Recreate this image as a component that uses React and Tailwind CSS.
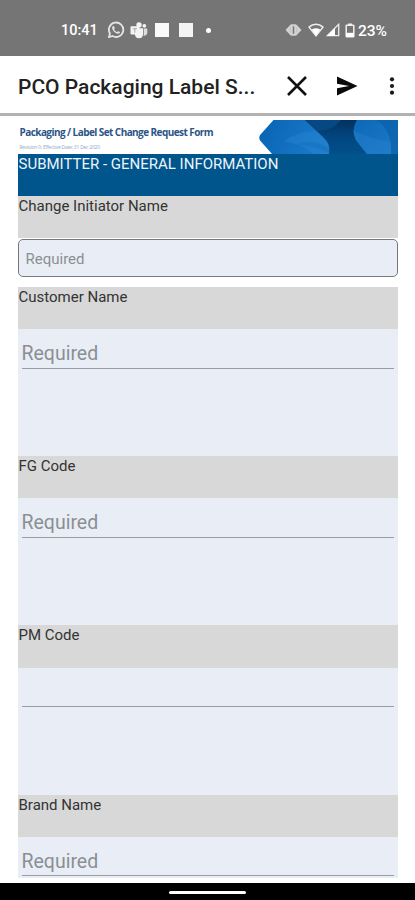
import React from 'react'

const fields = [
  { label: 'Customer Name', placeholder: 'Required' },
  { label: 'FG Code', placeholder: 'Required' },
  { label: 'PM Code', placeholder: '' },
  { label: 'Brand Name', placeholder: 'Required' },
]

function WhatsAppIcon() {
  return (
    <svg width="18" height="18" viewBox="0 0 24 24" fill="none" stroke="#e4e4e4" strokeWidth="2.4">
      <path d="M2.5 21.5l1.4-4.9A9.6 9.6 0 1 1 7.4 20z" strokeLinejoin="round" />
      <path
        d="M8.1 6.8c-2.300 1.900-.9 5.200 1.500 7.600s5.600 3.700 7.400 1.700c.5-.8.3-1.400-.3-1.700l-1.900-.9-1.400 1.300c-1.700-.6-3.200-2-4-3.900l1-1.400-.8-2.100c-.3-.8-.9-.9-1.500-.6z"
        fill="#e4e4e4"
        stroke="none"
      />
    </svg>
  )
}

function TeamsIcon() {
  return (
    <svg width="18" height="17" viewBox="0 0 18 17" fill="#f4f4f4">
      <circle cx="9" cy="3" r="2.700" />
      <circle cx="14.300" cy="3.800" r="1.900" />
      <path d="M5 6.300h8v6a4 4 0 0 1-8 0z" />
      <path d="M13.700 6.500H17.300v4.300a3.100 3.100 0 0 1-3.600 3z" fill="#dedede" />
      <rect x="0.500" y="4.300" width="8.600" height="8.200" rx="0.800" />
      <path d="M2.700 6.600h4.200M4.800 6.600v4.200" stroke="#b5b5b5" strokeWidth="1.200" />
    </svg>
  )
}

function VibrateIcon() {
  return (
    <svg width="17" height="14" viewBox="0 0 17 14">
      <path d="M.5 7L4 3.200 6 1.200h5l2 2L16.500 7 13 10.800l-2 2H6l-2-2z" fill="#d2d2d2" />
      <path d="M8.500 3.300v7.400" stroke="#777" strokeWidth="1.500" />
      <path d="M5.300 4.600v4.800M11.700 4.600v4.800" stroke="#bbb" strokeWidth="0.800" />
    </svg>
  )
}

function WifiIcon() {
  return (
    <svg width="16" height="14" viewBox="0 0 16 14">
      <path d="M1 4.100C5 .4 11 .4 15 4.100L8 12.700z" fill="none" stroke="#ededed" strokeWidth="1.500" />
      <path d="M3.700 6.400q4.300-2.100 8.600 0L8 12.700z" fill="#fff" />
    </svg>
  )
}

function SignalIcon() {
  return (
    <svg width="14" height="14" viewBox="0 0 14 14">
      <path d="M1.300 12.700L12.700 1.300v11.400z" fill="none" stroke="#ededed" strokeWidth="1.300" />
      <path d="M1 13l8-8v8z" fill="#fff" />
    </svg>
  )
}

function BatteryIcon() {
  return (
    <svg width="10" height="15" viewBox="0 0 10 15">
      <path d="M3 .5h4v2H3z" fill="#f0f0f0" />
      <rect x="1.200" y="2.200" width="7.600" height="11.600" rx="0.600" fill="none" stroke="#f0f0f0" strokeWidth="1.500" />
      <path d="M1.200 9.800h7.600v4H1.200z" fill="#fff" />
    </svg>
  )
}

function StatusBar() {
  return (
    <div className="flex h-14 shrink-0 items-center bg-[#757575] pt-1 pl-[61px] text-white">
      <span className="w-[46px] pt-[3px] text-[14.5px] font-medium leading-none">10:41</span>
      <WhatsAppIcon />
      <span className="ml-[5px]">
        <TeamsIcon />
      </span>
      <span className="ml-[7px] h-[14px] w-[14px] bg-[#fafafa]" />
      <span className="ml-[10px] h-[14px] w-[14px] bg-[#f4f4f4]" />
      <span className="ml-[13px] h-[5px] w-[5px] rounded-full bg-white" />
      <span className="ml-[74px]">
        <VibrateIcon />
      </span>
      <span className="ml-[6px]">
        <WifiIcon />
      </span>
      <span className="ml-[2px]">
        <SignalIcon />
      </span>
      <span className="ml-[5px]">
        <BatteryIcon />
      </span>
      <span className="ml-[3px] pt-[3px] text-[15.5px] font-medium leading-none">23%</span>
    </div>
  )
}

function AppBar() {
  return (
    <div className="flex h-[60px] shrink-0 items-center border-b-[3px] border-[#b2b2b2] bg-white pt-[3px] pl-[18px]">
      <h1 className="w-[269px] whitespace-nowrap pt-[2px] text-[21px] font-medium leading-none text-[#222]">
        PCO Packaging Label S...
      </h1>
      <svg width="20" height="20" viewBox="0 0 20 20" stroke="#111" strokeWidth="2.600">
        <path d="M1 1l18 18M19 1L1 19" />
      </svg>
      <svg className="ml-[30px]" width="21" height="20" viewBox="0 0 21 20" fill="#0a0a0a">
        <path d="M0 .4L20.500 10 0 19.600V12.200l12-2.200-12-2.200z" />
      </svg>
      <svg className="ml-[31px]" width="6" height="18" viewBox="0 0 6 18" fill="#1a1a1a">
        <circle cx="3" cy="2.300" r="2.100" />
        <circle cx="3" cy="9" r="2.100" />
        <circle cx="3" cy="15.700" r="2.100" />
      </svg>
    </div>
  )
}

function BannerArt() {
  return (
    <svg className="shrink-0" width="139" height="34" viewBox="0 0 139 34">
      <defs>
        <linearGradient id="left" gradientUnits="userSpaceOnUse" x1="0" y1="0" x2="70" y2="34">
          <stop offset="0" stopColor="#0863b2" />
          <stop offset="0.600" stopColor="#1573c4" />
          <stop offset="1" stopColor="#1f7dcb" />
        </linearGradient>
        <linearGradient id="dark" x1="0" y1="0" x2="0" y2="1">
          <stop offset="0" stopColor="#04305f" />
          <stop offset="0.500" stopColor="#024680" />
          <stop offset="1" stopColor="#02508c" />
        </linearGradient>
        <linearGradient id="right" x1="0" y1="0" x2="1" y2="1">
          <stop offset="0" stopColor="#0d68b8" />
          <stop offset="1" stopColor="#1c7bc9" />
        </linearGradient>
      </defs>
      <path d="M14.500 0H139v34H13L1.500 21Q-1 17.500 1.500 14.500z" fill="url(#left)" />
      <path d="M25 21Q42 10 58 11.500L68 22Q72 28 70 34H55Q46 25 25 21z" fill="#2987d5" opacity="0.400" />
      <path d="M38 24q18-5 32 4v5q-16-7-32-9z" fill="#0a66b6" opacity="0.300" />
      <path d="M46 0H98Q92 11 97 20L108 34H70Q72 24 64 17z" fill="url(#dark)" />
      <path d="M46 0H82Q72 12 58 11z" fill="#064883" />
      <path d="M98 0H139v34H108L97 20Q92 10 98 0z" fill="url(#right)" />
      <path d="M94 10q17 10 39 11V34h-25L97 20z" fill="#2b83cf" opacity="0.350" />
      <path d="M117 0q16 9 15 34h7V0z" fill="#0a5ba3" opacity="0.600" />
    </svg>
  )
}

function Banner() {
  return (
    <div className="flex h-[34px] shrink-0 justify-between bg-white">
      <div className="flex flex-col whitespace-nowrap pl-[2px] pt-[6px] font-['Open_Sans','Noto_Sans',sans-serif]">
        <span className="text-[10px] font-bold leading-[12px] tracking-[-0.57px] text-[#2c5587]">
          Packaging / Label Set Change Request Form
        </span>
        <span className="mt-[6px] text-[5px] leading-[7px] tracking-[-0.23px] text-[#8fa9c8]">
          Revision 0; Effective Date: 31 Dec 2020
        </span>
      </div>
      <BannerArt />
    </div>
  )
}

function Label({ children }) {
  return (
    <div className="h-[42.25px] shrink-0 bg-[#d8d8d8] pl-[1px] pt-px text-[15px] leading-[18px] text-[#333]">
      {children}
    </div>
  )
}

function Field({ label, placeholder }) {
  return (
    <div className="flex h-[169.2px] shrink-0 flex-col bg-[#e9eef6]">
      <Label>{label}</Label>
      <div className="mx-1 h-[39.4px] border-b border-[#979da2] pt-[13px] text-[19.5px] leading-[24px] text-[#8b8f94]">
        {placeholder}
      </div>
    </div>
  )
}

export default function App() {
  return (
    <div className="flex h-[900px] w-[415px] flex-col overflow-hidden bg-white font-[Roboto,sans-serif]">
      <StatusBar />
      <AppBar />

      {/* Form */}
      <div className="mx-[17.5px] flex h-[762px] shrink-0 flex-col overflow-hidden pt-1">
        <Banner />
        <div className="h-[42px] shrink-0 bg-[#00558c] pl-[1px] pt-px text-[15px] leading-[18px] text-[#edf4fb]">
          SUBMITTER - GENERAL INFORMATION
        </div>
        <Label>Change Initiator Name</Label>
        <div className="mt-[0.5px] flex h-[38px] shrink-0 items-center rounded-[5px] border border-[#75797e] bg-[#e9eef6] pt-[2px] pl-[7px] text-[15px] text-[#8b8f94]">
          Required
        </div>
        <div className="h-[10.250px] shrink-0" />
        {fields.map((field) => (
          <Field key={field.label} {...field} />
        ))}
      </div>

      {/* Navigation bar */}
      <div className="mt-auto flex h-[17px] shrink-0 justify-center bg-black pt-2">
        <div className="h-[3px] w-[77px] rounded-full bg-white" />
      </div>
    </div>
  )
}
